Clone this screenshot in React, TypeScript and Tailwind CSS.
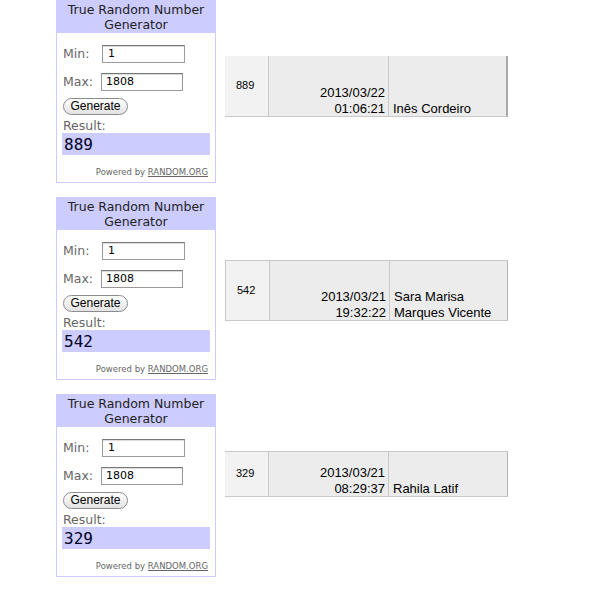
import React from 'react';

interface Draw {
  result: string;
  date: string;
  time: string;
  name: string[];
  top: string;
  rowH: string;
  edge: string;
}

const draws: Draw[] = [
  { result: '889', date: '2013/03/22', time: '01:06:21', name: ['Inês Cordeiro'], top: 'mt-[56px]', rowH: 'h-[61px]', edge: 'border-b border-r-2 border-r-[#aaaaaa]' },
  { result: '542', date: '2013/03/21', time: '19:32:22', name: ['Sara Marisa', 'Marques Vicente'], top: 'mt-[63px]', rowH: 'h-[61px]', edge: 'border-t border-b border-l border-r border-r-[#b4b4b4]' },
  { result: '329', date: '2013/03/21', time: '08:29:37', name: ['Rahila Latif'], top: 'mt-[57px]', rowH: 'h-[46px]', edge: 'border-t border-b border-r border-r-[#b4b4b4]' },
];

function Widget({ result }: { result: string }) {
  return (
    <div className="w-[160px] h-[183px] shrink-0 border border-[#ccccff] bg-white font-['DejaVu_Sans',Verdana,sans-serif] flex flex-col">
      <div className="h-[32px] bg-[#ccccff] text-center text-[12.5px] leading-[15px] text-[#222] pt-[1px]">
        True Random Number
        <br />
        Generator
      </div>
      <div className="px-[6px] pt-[12px] flex flex-col">
        <div className="flex items-center h-[18px]">
          <span className="w-[39px] text-[12.5px] text-[#666]">Min:</span>
          <div className="w-[83px] h-[18px] border border-[#9a9a9a] border-t-[#777] bg-white text-[11px] leading-[16px] pl-[5px] text-black shadow-[inset_0_1px_1px_rgba(0,0,0,0.15)]">1</div>
        </div>
        <div className="flex items-center h-[18px] mt-[10px]">
          <span className="w-[38px] text-[12.5px] text-[#666]">Max:</span>
          <div className="w-[82px] h-[18px] border border-[#9a9a9a] border-t-[#777] bg-white text-[11px] leading-[16px] pl-[4px] text-black shadow-[inset_0_1px_1px_rgba(0,0,0,0.15)]">1808</div>
        </div>
        <div className="mt-[7px] w-[65px] h-[17px] rounded-full border border-[#8c8c8c] bg-gradient-to-b from-white to-[#e2e2e2] text-center text-[12px] leading-[15px] text-black font-['Liberation_Sans',Arial,sans-serif]">
          Generate
        </div>
        <div className="mt-[4px] text-[12.5px] leading-[14px] text-[#666]">Result:</div>
        <div className="-ml-[1px] w-[148px] h-[22px] bg-[#ccccff] text-[16px] leading-[23px] pl-[2px] text-[#000022] font-['DejaVu_Sans_Mono','DejaVu_Sans',monospace]">
          {result}
        </div>
        <div className="mt-[11px] text-right pr-[1px] text-[8.5px] text-[#666]">
          Powered by <span className="underline">RANDOM.ORG</span>
        </div>
      </div>
    </div>
  );
}

function Row({ d }: { d: Draw }) {
  return (
    <div className={`ml-[9px] w-[283px] flex border-[#c8c8c8] font-['Liberation_Sans',Arial,sans-serif] text-black ${d.top} ${d.rowH} ${d.edge}`}>
      <div className="w-[43px] bg-[#f2f2f2] flex items-center pl-[11px] text-[11px] pb-[1px]">{d.result}</div>
      <div className="w-[120px] bg-[#ececec] border-l border-[#c8c8c8] flex flex-col justify-end items-end pr-[3px] text-[13px] leading-[15.5px]">
        <span>{d.date}</span>
        <span>{d.time}</span>
      </div>
      <div className="flex-1 bg-[#ececec] border-l border-[#c8c8c8] flex flex-col justify-end pl-[4px] text-[13px] leading-[15.5px]">
        {d.name.map(n => (
          <span key={n}>{n}</span>
        ))}
      </div>
    </div>
  );
}

export default function App() {
  return (
    <div className="w-[600px] h-[600px] bg-white overflow-hidden">
      <div className="pl-[56px] flex flex-col gap-[14px]">
        {draws.map(d => (
          <div key={d.result} className="flex items-start">
            <Widget result={d.result} />
            <Row d={d} />
          </div>
        ))}
      </div>
    </div>
  );
}
